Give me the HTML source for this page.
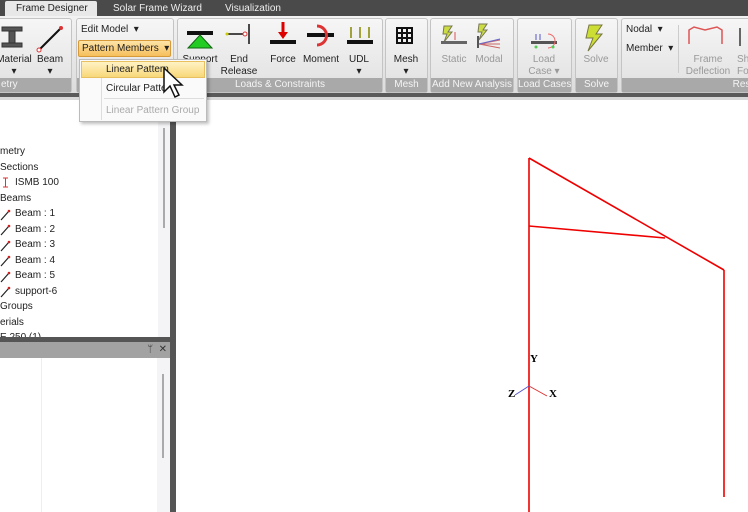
<!DOCTYPE html>
<html><head><meta charset="utf-8"><style>
*{margin:0;padding:0;box-sizing:border-box}
body{width:748px;height:512px;overflow:hidden;position:relative;background:#fff;font-family:"Liberation Sans","DejaVu Sans",sans-serif;font-size:10px;color:#222}
.a{position:absolute}
.tabs{left:0;top:0;width:748px;height:17px;background:#4a4a4a}
.tab{top:2px;height:15px;color:#eee;font-size:10px;line-height:14px}
.rib{left:0;top:16px;width:748px;height:78px;background:linear-gradient(#f2f2f2,#dcdcdc)}
.grp{top:18px;height:75px;border:1px solid #c4c4c4;border-radius:3px;background:linear-gradient(#f6f6f6,#e0e0e0)}
.gl{position:absolute;left:0;right:0;bottom:0;height:14px;background:#a9a9a9;color:#f4f4f4;text-align:center;font-size:10px;line-height:14px;white-space:nowrap;overflow:hidden}
.lbl{text-align:center;font-size:10px;line-height:12px;color:#222}
.dis{color:#999}
.tree{font-size:10px;line-height:15.5px;color:#222}
</style></head><body>
<div class="a tabs"></div>
<div class="a" style="left:5px;top:1px;width:92px;height:16px;background:#e8e8e8;border-radius:2px 2px 0 0"></div>
<div class="a tab" style="left:16px;color:#222">Frame Designer</div>
<div class="a tab" style="left:113px">Solar Frame Wizard</div>
<div class="a tab" style="left:225px">Visualization</div>
<div class="a rib"></div>
<div class="a grp" style="left:-4px;width:76px"><div class="gl" style="text-align:left;padding-left:4px">etry</div></div>
<div class="a grp" style="left:76px;width:98px"><div class="gl"></div></div>
<div class="a grp" style="left:177px;width:206px"><div class="gl">Loads &amp; Constraints</div></div>
<div class="a grp" style="left:385px;width:43px"><div class="gl">Mesh</div></div>
<div class="a grp" style="left:430px;width:84px"><div class="gl">Add New Analysis</div></div>
<div class="a grp" style="left:517px;width:55px"><div class="gl">Load Cases</div></div>
<div class="a grp" style="left:575px;width:43px"><div class="gl">Solve</div></div>
<div class="a grp" style="left:621px;width:140px"><div class="gl" style="text-align:right;padding-right:4px">Resu</div></div>
<div class="a" style="left:0;top:93px;width:748px;height:4px;background:#5a5a5a"></div>
<div class="a" style="left:0;top:97px;width:748px;height:3px;background:#d8d8d8"></div>
<svg class="a" style="left:0;top:18px" width="748" height="60">
<g fill="#555" stroke="#333" stroke-width="1"><rect x="2" y="9" width="20" height="4"/><rect x="2" y="25" width="20" height="4"/><rect x="9" y="13" width="6" height="12"/></g>
<line x1="39" y1="32" x2="61" y2="10" stroke="#111" stroke-width="2"/><circle cx="61" cy="10" r="2" fill="#d33"/><circle cx="39" cy="32" r="2" fill="#fff" stroke="#d33"/>
<rect x="187" y="13" width="26" height="4" fill="#111"/><polygon points="200,17 188,30 212,30" fill="#2c2" stroke="#161"/>
<line x1="227" y1="16" x2="245" y2="16" stroke="#111" stroke-width="1.5"/><line x1="249" y1="6" x2="249" y2="26" stroke="#111" stroke-width="1.5"/><circle cx="245" cy="16" r="2" fill="#fff" stroke="#d33"/><circle cx="227" cy="16" r="1.5" fill="#cc0"/>
<rect x="270" y="22" width="26" height="4" fill="#111"/><line x1="283" y1="4" x2="283" y2="15" stroke="#d00" stroke-width="3"/><polygon points="278,14 288,14 283,21" fill="#d00"/>
<rect x="307" y="15" width="27" height="4" fill="#111"/><path d="M317 8 A8 8 0 1 1 317 27" fill="none" stroke="#d33" stroke-width="3"/>
<rect x="347" y="22" width="26" height="4" fill="#111"/><g stroke="#880" stroke-width="1.5" fill="#dd0"><line x1="351" y1="9" x2="351" y2="20"/><line x1="360" y1="9" x2="360" y2="20"/><line x1="369" y1="9" x2="369" y2="20"/></g>
<g fill="none" stroke="#111" stroke-width="2"><rect x="397" y="10" width="15" height="15"/><line x1="402" y1="10" x2="402" y2="25"/><line x1="407" y1="10" x2="407" y2="25"/><line x1="397" y1="15" x2="412" y2="15"/><line x1="397" y1="20" x2="412" y2="20"/></g>
<polygon points="444,8 452,8 448,14 452,14 444,24 447,16 443,16" fill="#cd4" stroke="#775"/><rect x="441" y="23" width="26" height="3" fill="#666"/><line x1="455" y1="14" x2="455" y2="22" stroke="#d55"/>
<polygon points="479,6 487,6 483,12 487,12 479,22 482,14 478,14" fill="#cd4" stroke="#775"/><line x1="478" y1="18" x2="478" y2="30" stroke="#555" stroke-width="2"/><path d="M479 26 L500 22 M479 26 L500 30 M479 26 L500 26" stroke="#c66"/><path d="M479 26 L500 21" stroke="#66c"/>
<rect x="531" y="23" width="26" height="3" fill="#555"/><g stroke="#55c"><line x1="536" y1="16" x2="536" y2="22"/><line x1="540" y1="16" x2="540" y2="22"/></g><path d="M548 16 A6 6 0 1 1 548 30" fill="none" stroke="#e66"/><circle cx="536" cy="29" r="1.5" fill="#5c5"/><circle cx="553" cy="29" r="1.5" fill="#5c5"/>
<polygon points="589,7 602,7 596,16 602,16 588,33 593,20 586,20" fill="#cd3" stroke="#774"/>
<path d="M689 26 L689 12 L694 9 L705 12 L717 9 L722 12 L722 26" fill="none" stroke="#d55" stroke-width="1.5"/>
<line x1="740" y1="10" x2="740" y2="28" stroke="#666" stroke-width="2"/>
</svg>
<div class="a lbl" style="left:-8px;top:54px;width:44px">Material<br>▾</div>
<div class="a lbl" style="left:30px;top:54px;width:40px">Beam<br>▾</div>
<div class="a" style="left:81px;top:24px">Edit Model &nbsp;▾</div>
<div class="a" style="left:78px;top:40px;width:93px;height:17px;background:linear-gradient(#fde4a8,#f6bf5c);border:1px solid #d79a3a;border-radius:2px;line-height:15px;padding-left:3px">Pattern Members &nbsp;▾</div>
<div class="a lbl" style="left:179px;top:54px;width:42px">Support</div>
<div class="a lbl" style="left:219px;top:54px;width:40px">End<br>Release</div>
<div class="a lbl" style="left:264px;top:54px;width:38px">Force</div>
<div class="a lbl" style="left:300px;top:54px;width:42px">Moment</div>
<div class="a lbl" style="left:342px;top:54px;width:34px">UDL<br>▾</div>
<div class="a lbl" style="left:388px;top:54px;width:36px">Mesh<br>▾</div>
<div class="a lbl dis" style="left:436px;top:54px;width:36px">Static</div>
<div class="a lbl dis" style="left:470px;top:54px;width:38px">Modal</div>
<div class="a lbl dis" style="left:522px;top:54px;width:44px">Load<br>Case ▾</div>
<div class="a lbl dis" style="left:577px;top:54px;width:38px">Solve</div>
<div class="a" style="left:626px;top:24px">Nodal &nbsp;▾</div>
<div class="a" style="left:626px;top:43px">Member &nbsp;▾</div>
<div class="a" style="left:678px;top:25px;width:1px;height:48px;background:#ccc"></div>
<div class="a lbl dis" style="left:680px;top:54px;width:56px">Frame<br>Deflection</div>
<div class="a lbl dis" style="left:737px;top:54px;width:30px;text-align:left">Sh<br>Fo</div>
<div class="a" style="left:0;top:100px;width:172px;height:412px;background:#fff"></div>
<div class="a" style="left:158px;top:100px;width:12px;height:238px;background:#f4f4f6"></div>
<div class="a" style="left:163px;top:128px;width:2px;height:100px;background:#aaa"></div>
<svg class="a" style="left:0;top:170px" width="20" height="130">
<g stroke="#d33" stroke-width="1"><line x1="3" y1="8" x2="8" y2="8"/><line x1="3" y1="17" x2="8" y2="17"/><line x1="5.5" y1="8" x2="5.5" y2="17"/></g>
<g stroke="#222" stroke-width="1.2"><line x1="1" y1="50" x2="9" y2="41"/><line x1="1" y1="65" x2="9" y2="56"/><line x1="1" y1="81" x2="9" y2="72"/><line x1="1" y1="96" x2="9" y2="87"/><line x1="1" y1="112" x2="9" y2="103"/><line x1="1" y1="127" x2="9" y2="118"/></g>
<g fill="#c22"><circle cx="9" cy="41" r="1.3"/><circle cx="9" cy="56" r="1.3"/><circle cx="9" cy="72" r="1.3"/><circle cx="9" cy="87" r="1.3"/><circle cx="9" cy="103" r="1.3"/><circle cx="9" cy="118" r="1.3"/></g>
</svg>
<div class="a tree" style="left:0;top:144px">metry<br>Sections<br><span style="padding-left:15px">ISMB 100</span><br>Beams<br>
<span style="padding-left:15px">Beam : 1</span><br><span style="padding-left:15px">Beam : 2</span><br><span style="padding-left:15px">Beam : 3</span><br><span style="padding-left:15px">Beam : 4</span><br><span style="padding-left:15px">Beam : 5</span><br><span style="padding-left:15px">support-6</span><br>Groups<br>erials<br>E 250 (1)</div>
<div class="a" style="left:0;top:337px;width:172px;height:5px;background:#555"></div>
<div class="a" style="left:0;top:342px;width:172px;height:16px;background:#a2a2a2;color:#333;font-size:10px;text-align:right;padding-right:5px;line-height:15px">ᛘ &nbsp;✕</div>
<div class="a" style="left:41px;top:358px;width:1px;height:154px;background:#eee"></div>
<div class="a" style="left:157px;top:358px;width:13px;height:154px;background:#f4f4f6"></div>
<div class="a" style="left:162px;top:374px;width:2px;height:84px;background:#aaa"></div>
<div class="a" style="left:170px;top:100px;width:6px;height:412px;background:#555"></div>
<div class="a" style="left:79px;top:59px;width:128px;height:63px;background:#fafafa;border:1px solid #bbb;box-shadow:2px 2px 3px rgba(0,0,0,.25)"></div>
<div class="a" style="left:101px;top:62px;width:1px;height:58px;background:#ddd"></div>
<div class="a" style="left:81px;top:61px;width:124px;height:17px;background:linear-gradient(#fff3c4,#f8d77a);border:1px solid #e8c060"></div>
<div class="a" style="left:106px;top:64px">Linear Pattern</div>
<div class="a" style="left:106px;top:83px">Circular Patte</div>
<div class="a" style="left:104px;top:98px;width:100px;height:1px;background:#ddd"></div>
<div class="a" style="left:106px;top:105px;color:#aaa">Linear Pattern Group</div>
<svg class="a" style="left:160px;top:66px" width="30" height="40"><path d="M4 2 L4 26 L10 20 L15 31 L19 29 L14 19 L22 19 Z" fill="#fff" stroke="#111" stroke-width="1.5"/></svg>
<svg class="a" style="left:0;top:0" width="748" height="512">
<g stroke="#e00" stroke-width="1.6" fill="none"><line x1="529" y1="158" x2="529" y2="512"/><line x1="529" y1="158" x2="724" y2="270"/><line x1="724" y1="270" x2="724" y2="497"/><line x1="529" y1="226" x2="665" y2="238"/></g>
<line x1="529" y1="386" x2="547" y2="396" stroke="#d33"/><line x1="529" y1="386" x2="515" y2="395" stroke="#55c"/>
<text x="530" y="362" font-family="Liberation Serif" font-weight="bold" font-size="11">Y</text>
<text x="549" y="397" font-family="Liberation Serif" font-weight="bold" font-size="11">X</text>
<text x="508" y="397" font-family="Liberation Serif" font-weight="bold" font-size="11">Z</text>
</svg>
</body></html>
